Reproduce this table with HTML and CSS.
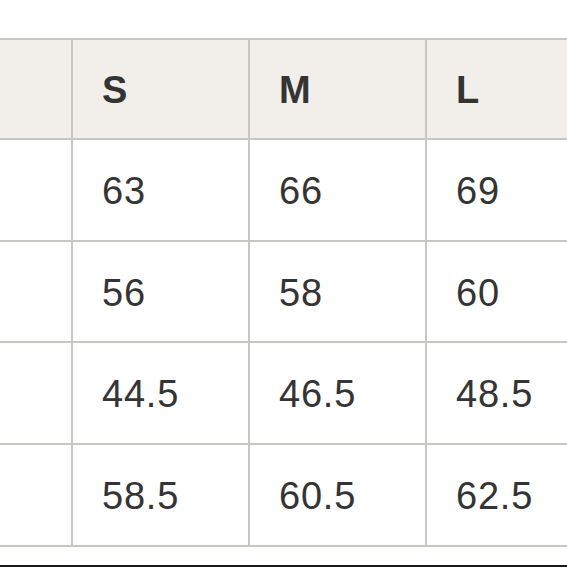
FILE: index.html
```html
<!DOCTYPE html>
<html>
<head>
<meta charset="utf-8">
<link rel="stylesheet" href="styles.css">
</head>
<body>
<div class="page">
  <div class="table">
    <div class="row head">
      <div class="cell first"></div>
      <div class="cell">S</div>
      <div class="cell">M</div>
      <div class="cell last">L</div>
    </div>
    <div class="row">
      <div class="cell first"></div>
      <div class="cell">63</div>
      <div class="cell">66</div>
      <div class="cell last">69</div>
    </div>
    <div class="row">
      <div class="cell first"></div>
      <div class="cell">56</div>
      <div class="cell">58</div>
      <div class="cell last">60</div>
    </div>
    <div class="row">
      <div class="cell first"></div>
      <div class="cell">44.5</div>
      <div class="cell">46.5</div>
      <div class="cell last">48.5</div>
    </div>
    <div class="row">
      <div class="cell first"></div>
      <div class="cell">58.5</div>
      <div class="cell">60.5</div>
      <div class="cell last">62.5</div>
    </div>
  </div>
  <div class="rule"></div>
</div>
</body>
</html>
```
FILE: styles.css
```css
html, body {
  margin: 0;
  padding: 0;
  background: #ffffff;
}
.page {
  width: 567px;
  height: 567px;
  overflow: hidden;
  display: flex;
  flex-direction: column;
  padding-top: 38px;
  box-sizing: border-box;
  font-family: "Liberation Sans", Arial, sans-serif;
  color: #343434;
}
.table {
  border-top: 2px solid #c9c7c4;
  flex-shrink: 0;
}
.row {
  display: grid;
  grid-template-columns: 73px 177px 177px 1fr;
  height: 101.7px;
  border-bottom: 2px solid #c9c7c4;
  box-sizing: border-box;
}
.head {
  background: #f2eee9;
  font-weight: bold;
  height: 100px;
}
.cell {
  display: flex;
  align-items: center;
  padding-left: 29px;
  padding-top: 3px;
  font-size: 38px;
  letter-spacing: 0.8px;
  border-right: 2px solid #c9c7c4;
  box-sizing: border-box;
}
.cell.first {
  padding-left: 0;
}
.cell.last {
  border-right: none;
}
.rule {
  flex-shrink: 0;
  margin-top: 18px;
  height: 2px;
  background: #1a1a1a;
}
```
